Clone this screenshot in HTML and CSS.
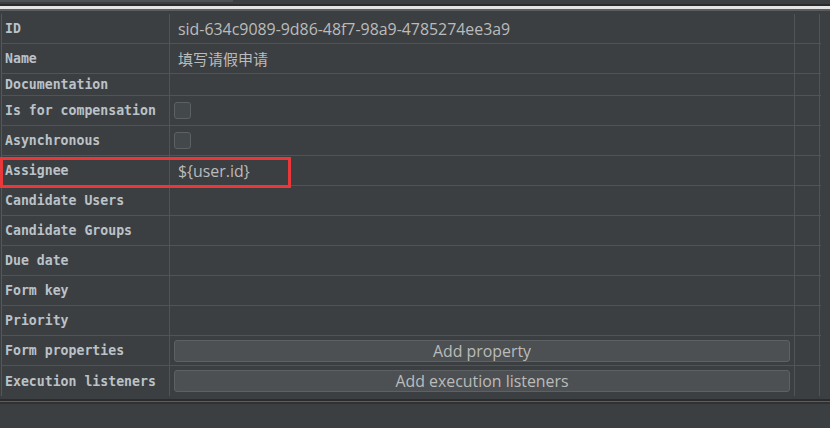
FILE: index.html
```html
<!DOCTYPE html>
<html>
<head>
<meta charset="utf-8">
<link rel="stylesheet" href="styles.css">
</head>
<body>
<div class="topbar"><div class="thumb"></div></div>
<div class="sep-dark"></div>
<div class="sep-white"></div>
<div class="sep-gray"></div>
<div class="panel">
  <div class="table">
    <div class="row r30"><div class="lbl">ID</div><div class="val">sid-634c9089-9d86-48f7-98a9-4785274ee3a9</div><div class="ext"></div></div>
    <div class="row r30"><div class="lbl">Name</div><div class="val"><span class="cjk">填写请假申请</span></div><div class="ext"></div></div>
    <div class="row r22"><div class="lbl">Documentation</div><div class="val"></div><div class="ext"></div></div>
    <div class="row r30"><div class="lbl">Is for compensation</div><div class="val"><span class="check"></span></div><div class="ext"></div></div>
    <div class="row r30"><div class="lbl">Asynchronous</div><div class="val"><span class="check"></span></div><div class="ext"></div></div>
    <div class="row r30"><div class="lbl">Assignee</div><div class="val">${user.id}</div><div class="ext"></div></div>
    <div class="row r30"><div class="lbl">Candidate Users</div><div class="val"></div><div class="ext"></div></div>
    <div class="row r30"><div class="lbl">Candidate Groups</div><div class="val"></div><div class="ext"></div></div>
    <div class="row r30"><div class="lbl">Due date</div><div class="val"></div><div class="ext"></div></div>
    <div class="row r30"><div class="lbl">Form key</div><div class="val"></div><div class="ext"></div></div>
    <div class="row r30"><div class="lbl">Priority</div><div class="val"></div><div class="ext"></div></div>
    <div class="row r30"><div class="lbl">Form properties</div><div class="val"><div class="btn">Add property</div></div><div class="ext"></div></div>
    <div class="row r30 last"><div class="lbl">Execution listeners</div><div class="val"><div class="btn">Add execution listeners</div></div><div class="ext"></div></div>
  </div>
  <div class="highlight"></div>
</div>
<div class="foot-dark"></div>
<div class="foot-gray"></div>
<div class="foot-dark2"></div>
<div class="bottom"></div>
</body>
</html>
```
FILE: styles.css
```css
html, body {
  margin: 0;
  padding: 0;
  background: #3c3f41;
  width: 830px;
  height: 428px;
  overflow: hidden;
}
.topbar {
  height: 4px;
  background: #3c3f41;
}
.thumb {
  width: 233px;
  height: 2px;
  background: #4e5254;
}
.sep-dark { height: 2px; background: #2b2b2b; }
.sep-white { height: 3px; background: #e4e4e4; }
.sep-gray { height: 2px; background: #5a5d60; }
.panel {
  position: relative;
  padding-top: 3px;
  height: 387px;
  box-sizing: border-box;
}
.table {
  margin-left: 1px;
  border-left: 1px solid #555758;
  width: 819px;
  display: flex;
  flex-direction: column;
}
.row {
  display: grid;
  grid-template-columns: 168px 625px 25px;
  border-bottom: 1px solid #515456;
  box-sizing: border-box;
}
.row.last { border-bottom: none; }
.r30 { height: 30px; }
.r22 { height: 22px; }
.row > div {
  border-right: 1px solid #515456;
  display: flex;
  align-items: center;
  box-sizing: border-box;
}
.lbl {
  padding-left: 3px;
  font-family: "DejaVu Sans Mono", monospace;
  font-weight: bold;
  font-size: 13.2px;
  color: #bbc2c8;
}
.val {
  padding-left: 8px;
  font-family: "Open Sans", "Noto Sans CJK SC", sans-serif;
  font-size: 15.9px;
  color: #bbbbbb;
}
.cjk {
  font-family: "Noto Sans CJK SC", sans-serif;
  font-size: 15px;
}
.check {
  display: block;
  width: 17px;
  height: 17px;
  box-sizing: border-box;
  border: 1px solid #5e6163;
  border-radius: 3px;
  background: #43484a;
  margin-left: -4px;
}
.btn {
  width: 616px;
  height: 22px;
  margin-left: -4px;
  box-sizing: border-box;
  border: 1px solid #5e6163;
  border-radius: 3px;
  background: #4c5052;
  display: flex;
  align-items: center;
  justify-content: center;
  font-size: 15.9px;
  color: #bbbbbb;
}
.highlight {
  position: absolute;
  left: 0;
  top: 146px;
  width: 291px;
  height: 31px;
  border: 3px solid #e8383a;
  box-sizing: border-box;
}
.foot-dark { height: 2px; background: #2b2b2b; margin-top: 1px; }
.foot-gray { height: 1px; background: #5a5d60; }
.foot-dark2 { height: 2px; background: #2f3133; }
.bottom { height: 30px; background: #3c3f41; }
```
